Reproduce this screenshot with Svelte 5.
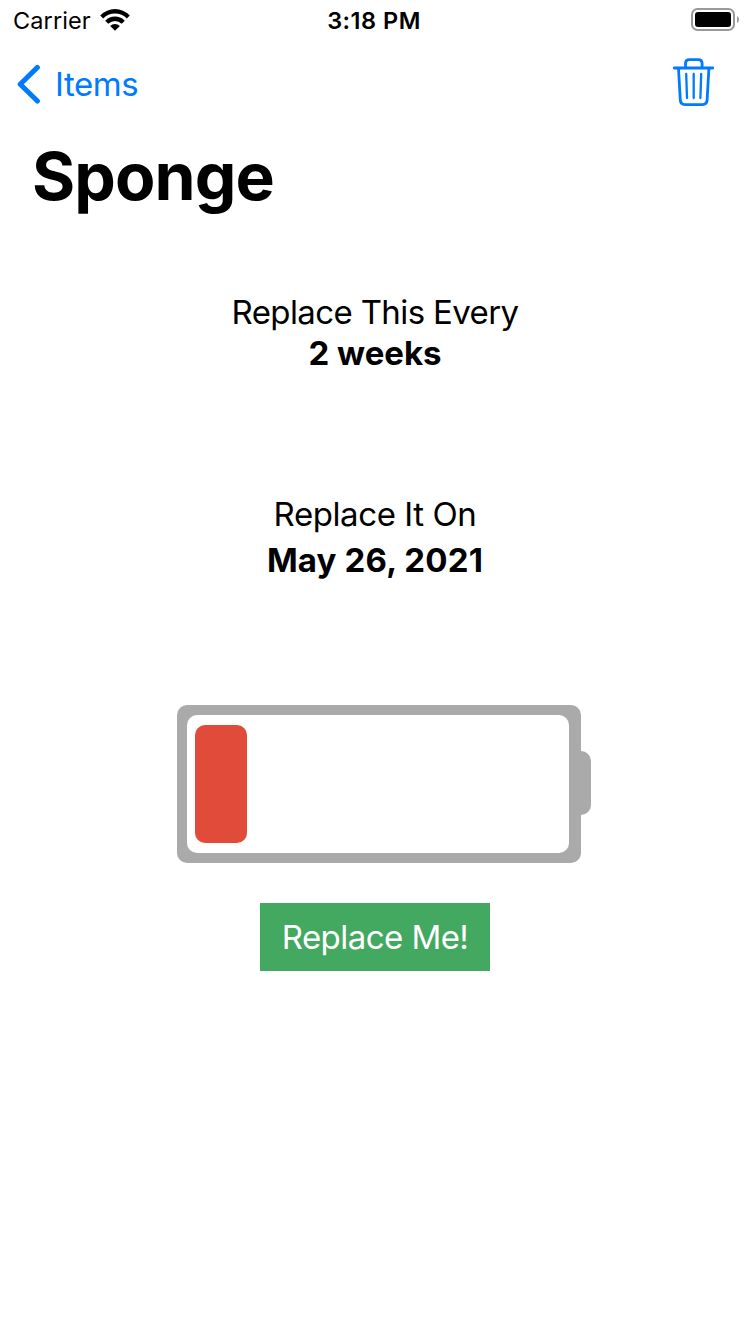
<script lang="ts">
  const charge = 52;
</script>

<div class="screen">
  <header class="status">
    <div class="carrier">
      <span>Carrier</span>
      <svg width="30" height="22" viewBox="0 0 30 22">
        <path d="M0.2 6.6Q6.7 0.1 15 0.1T29.8 6.6L26.8 9.6Q22.1 4.6 15 4.6T3.2 9.6Z" />
        <path d="M5.2 11.7Q9.4 7.5 15 7.5T24.8 11.7L21.7 14.7Q18.8 12 15 12T8.3 14.7Z" />
        <path d="M10.2 16.9Q12.2 15 15 15T19.8 16.9L15 21.7Z" />
      </svg>
    </div>
    <time>3:18 PM</time>
    <div class="power">
      <svg width="48" height="24" viewBox="0 0 48 24">
        <rect x="1" y="1" width="42" height="21" rx="5.5" fill="none" stroke="#999" stroke-width="2" />
        <rect x="4" y="4" width="36" height="15" rx="3" />
        <path d="M46 8Q48 9 48 11.5T46 15Z" fill="#999" />
      </svg>
    </div>
  </header>

  <nav>
    <button class="back">
      <svg width="24" height="40" viewBox="0 0 24 40">
        <path d="M20.4 3.4L3.2 20.2L20.4 37" />
      </svg>
      <span>Items</span>
    </button>
    <button class="trash" aria-label="Delete">
      <svg width="42" height="50" viewBox="0 0 42 50">
        <path d="M1.2 11H39.8M12.5 10.5V6.6Q12.5 2.7 16.4 2.7H25.2Q29.1 2.7 29.1 6.6V10.5M5.5 11.5L7.3 43.2Q7.6 47.6 12 47.6H29.4Q33.8 47.6 34.1 43.2L35.9 11.5" stroke-width="2.8" />
        <path d="M13.2 17L14 41M20.7 17V41M28.2 17L27.4 41" stroke-width="2.3" />
      </svg>
    </button>
  </nav>

  <h1><span>Sponge</span></h1>

  <main>
    <section class="interval">
      <p class="every">Replace This Every</p>
      <strong class="weeks">2 weeks</strong>
    </section>
    <section class="due">
      <p class="on">Replace It On</p>
      <strong class="date">May 26, 2021</strong>
    </section>
    <div class="battery">
      <div class="case">
        <div class="cell">
          <div class="level" style="width: {charge}px"></div>
        </div>
      </div>
      <div class="nub"></div>
    </div>
    <button class="replace"><span>Replace Me!</span></button>
  </main>
</div>

<style>
  :global(body) { margin: 0; background: #fff; }
  .screen {
    width: 750px;
    height: 1334px;
    overflow: hidden;
    display: flex;
    flex-direction: column;
    background: #fff;
    color: #000;
    font-family: Inter, "Liberation Sans", sans-serif;
    font-size: 33px;
  }
  button { border: 0; margin: 0; padding: 0; background: none; font: inherit; color: inherit; }
  svg { display: block; }
  p { margin: 0; }
  .status {
    height: 40px;
    box-sizing: border-box;
    padding: 0 11px 0 13px;
    display: grid;
    grid-template-columns: 1fr auto 1fr;
    align-items: center;
    font-size: 23.5px;
  }
  .carrier { display: flex; align-items: center; gap: 9px; letter-spacing: 0.1px; }
  .status time { font-weight: 600; letter-spacing: 0.5px; padding-right: 4px; }
  .power { display: flex; justify-content: flex-end; }
  nav {
    height: 88px;
    box-sizing: border-box;
    padding: 0 35px 0 17px;
    display: flex;
    justify-content: space-between;
    align-items: center;
    color: #007aff;
  }
  nav svg { fill: none; stroke: currentColor; stroke-linecap: round; stroke-linejoin: round; }
  .back { display: flex; align-items: center; gap: 14px; letter-spacing: -0.4px; }
  .back svg { stroke-width: 5; }
  .trash { padding-bottom: 4px; }
  h1 {
    margin: 0;
    height: 104px;
    padding-left: 32px;
    font-size: 66px;
    line-height: 96px;
    font-weight: 700;
    letter-spacing: -0.9px;
  }
  main { display: flex; flex-direction: column; align-items: center; }
  section { display: flex; flex-direction: column; align-items: center; }
  .interval { padding-top: 60px; height: 142px; line-height: 41px; }
  .due { padding-top: 57px; height: 271px; line-height: 46px; box-sizing: border-box; }
  strong { font-weight: 700; }
  .every { letter-spacing: -0.62px; }
  .on { letter-spacing: -0.42px; }
  .date { letter-spacing: 0.17px; }
  .battery { display: flex; align-items: flex-start; padding-left: 18px; }
  .case {
    width: 404px;
    height: 158px;
    box-sizing: border-box;
    padding: 10px 12px 10px 10px;
    border-radius: 10px;
    background: #aaa;
  }
  .cell { height: 138px; box-sizing: border-box; padding: 10px 8px; border-radius: 10px; background: #fff; }
  .level { height: 118px; border-radius: 10px; background: #e14b39; }
  .nub { width: 10px; height: 64px; margin-top: 46px; border-radius: 0 10px 10px 0; background: #aaa; }
  .replace {
    width: 230px;
    height: 68px;
    margin-top: 40px;
    background: #43a860;
    color: #fff;
    letter-spacing: -0.55px;
  }
</style>
